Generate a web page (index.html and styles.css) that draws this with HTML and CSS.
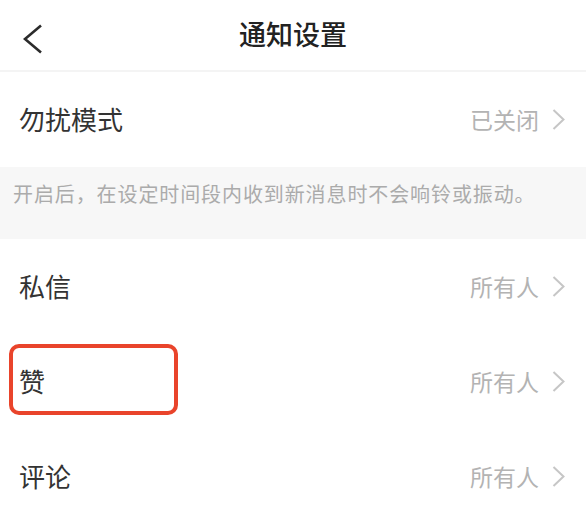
FILE: index.html
```html
<!DOCTYPE html>
<html lang="zh-CN">
<head>
    <meta charset="UTF-8">
    <meta name="viewport" content="width=device-width, initial-scale=1.0">
    <title>通知设置</title>
    <link rel="stylesheet" href="styles.css">
</head>
<body>
    <div class="page">
        <header class="nav">
            <span class="back">
                <svg width="20" height="30" viewBox="0 0 20 30">
                    <polyline points="18,1.5 2,15 18,28.5" fill="none" stroke="#2b2b2b" stroke-width="2.6" stroke-linejoin="miter"/>
                </svg>
            </span>
            <h1>通知设置</h1>
        </header>

        <div class="row">
            <span class="label">勿扰模式</span>
            <span class="value">已关闭<svg class="chev" width="13" height="21" viewBox="0 0 13 21"><polyline points="1.5,1 11.5,10.5 1.5,20" fill="none" stroke="#c6c6c6" stroke-width="2"/></svg></span>
        </div>

        <div class="tip">开启后，在设定时间段内收到新消息时不会响铃或振动。</div>

        <div class="row">
            <span class="label">私信</span>
            <span class="value">所有人<svg class="chev" width="13" height="21" viewBox="0 0 13 21"><polyline points="1.5,1 11.5,10.5 1.5,20" fill="none" stroke="#c6c6c6" stroke-width="2"/></svg></span>
        </div>
        <div class="row">
            <span class="label">赞</span>
            <span class="value">所有人<svg class="chev" width="13" height="21" viewBox="0 0 13 21"><polyline points="1.5,1 11.5,10.5 1.5,20" fill="none" stroke="#c6c6c6" stroke-width="2"/></svg></span>
            <!-- 标注框 -->
            <span class="mark"></span>
        </div>
        <div class="row">
            <span class="label">评论</span>
            <span class="value">所有人<svg class="chev" width="13" height="21" viewBox="0 0 13 21"><polyline points="1.5,1 11.5,10.5 1.5,20" fill="none" stroke="#c6c6c6" stroke-width="2"/></svg></span>
        </div>
    </div>
</body>
</html>
```

FILE: styles.css
```css
body {
    margin: 0;
    background-color: #fff;
    font-family: "Noto Sans CJK SC", "Noto Sans", sans-serif;
    color: #333;
}
.page {
    width: 586px;
    height: 530px;
    overflow: hidden;
}
.nav {
    height: 72px;
    box-sizing: border-box;
    padding-bottom: 3px;
    display: flex;
    align-items: center;
    justify-content: center;
    position: relative;
    border-bottom: 2px solid #f4f4f4;
}
.nav h1 {
    margin: 0;
    font-size: 27px;
    font-weight: 500;
    color: #222;
}
.back {
    position: absolute;
    left: 23px;
    top: 24px;
    line-height: 0;
}
.row {
    height: 95px;
    box-sizing: border-box;
    padding: 0 21px 2px 19px;
    display: flex;
    align-items: center;
    justify-content: space-between;
    position: relative;
}
.label {
    font-size: 26px;
    color: #333;
}
.value {
    display: flex;
    align-items: center;
    font-size: 23px;
    color: #b3b3b3;
}
.chev {
    margin-left: 13px;
    margin-top: 2px;
}
.tip {
    height: 72px;
    box-sizing: border-box;
    padding: 12px 13px 0;
    background-color: #f7f7f7;
    font-size: 20px;
    letter-spacing: 0.9px;
    color: #ababab;
}
.mark {
    position: absolute;
    left: 9px;
    top: 10px;
    width: 169px;
    height: 71px;
    box-sizing: border-box;
    border: 4px solid #e9442b;
    border-radius: 10px;
}
```
